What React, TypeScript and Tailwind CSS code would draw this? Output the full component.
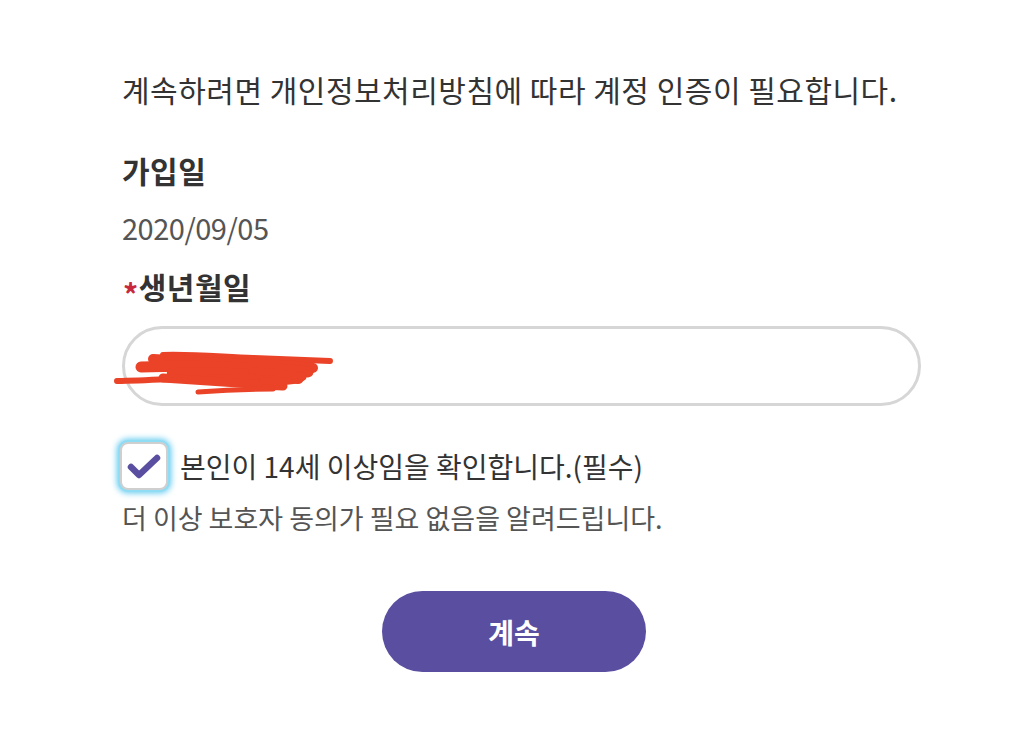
import { useState } from 'react';

const font = { fontFamily: '"Noto Sans CJK KR", "Noto Sans", sans-serif' };

function Scribble() {
  return (
    <svg
      className="pointer-events-none absolute left-[-12px] top-[18px]"
      width="230"
      height="54"
      viewBox="0 0 230 54"
      fill="none"
    >
      <g stroke="#ea4328" strokeLinecap="round" strokeLinejoin="round">
        <path d="M50 8 C80 7 110 10 140 11 C170 12 195 13 217 14" strokeWidth="6" />
        <path d="M40 12 C70 14 110 16 150 17 C175 18 190 20 200 21" strokeWidth="10" />
        <path d="M28 20 C60 19 100 19 140 21 C165 22 180 23 195 25" strokeWidth="11" />
        <path d="M60 26 C90 26 120 27 150 28 C165 29 175 30 185 31" strokeWidth="12" />
        <path d="M4 34 C40 33 80 31 120 30 C150 29 170 28 188 27" strokeWidth="6" />
        <path d="M50 31 C80 33 110 35 140 37 C150 38 160 39 170 39" strokeWidth="9" />
        <path d="M85 45 C110 43 130 42 160 42" strokeWidth="5" />
        <path d="M140 24 C160 25 175 26 190 30 C184 35 165 35 150 34" strokeWidth="7" />
      </g>
    </svg>
  );
}

export default function App() {
  const [agreed, setAgreed] = useState(true);

  return (
    <div className="min-h-[750px] w-full bg-white text-[#333]" style={font}>
      <div className="ml-[122px] w-[799px] pt-[68px]">
        <p className="whitespace-nowrap text-[30px] leading-[42px] tracking-[0.5px] text-[#333]">
          계속하려면 개인정보처리방침에 따라 계정 인증이 필요합니다.
        </p>

        <h3 className="mt-[39px] text-[30px] font-bold leading-[42px] tracking-[0.5px] text-[#333]">가입일</h3>
        <p className="mt-[17px] text-[29px] leading-[39px] tracking-[-0.5px] text-[#555]">2020/09/05</p>

        <h3 className="mt-[17px] flex items-center text-[30px] font-bold leading-[42px] tracking-[0.5px] text-[#333]">
          <span className="ml-[1px] mt-[14px] text-[30px] font-bold leading-none text-[#c8283c]">*</span>
          생년월일
        </h3>

        <div className="relative mt-[18px] h-[80px] w-full rounded-full border-[3px] border-[#d6d6d6] bg-white">
          <div className="flex h-full items-center pl-[36px] text-[24px] text-[#666]">19·· ·· ··</div>
          <Scribble />
        </div>

        <label className="mt-[36px] flex h-[48px] items-center">
          <button
            type="button"
            onClick={() => setAgreed(!agreed)}
            className="-ml-[2px] flex h-[48px] w-[48px] items-center justify-center rounded-[8px] border-2 border-[#cfcfcf] bg-white shadow-[0_0_0_2px_#8fdcf5,0_0_6px_3px_#5ec9f0]"
          >
            {agreed && (
              <svg width="34" height="30" viewBox="0 0 34 30" fill="none">
                <path
                  d="M4 16 L12 24 L30 7"
                  stroke="#5a4ea0"
                  strokeWidth="6.5"
                  strokeLinecap="round"
                  strokeLinejoin="round"
                />
              </svg>
            )}
          </button>
          <span className="ml-[12px] whitespace-nowrap text-[28px] leading-[36px] text-[#333]">
            본인이 14세 이상임을 확인합니다.(필수)
          </span>
        </label>

        <p className="mt-[10px] whitespace-nowrap text-[27px] leading-[36px] text-[#555]">
          더 이상 보호자 동의가 필요 없음을 알려드립니다.
        </p>

        <button
          type="button"
          className="ml-[260px] mt-[55px] flex h-[81px] w-[264px] items-center justify-center rounded-full bg-[#5a4ea0] text-[28px] font-bold text-white"
        >
          계속
        </button>
      </div>
    </div>
  );
}
